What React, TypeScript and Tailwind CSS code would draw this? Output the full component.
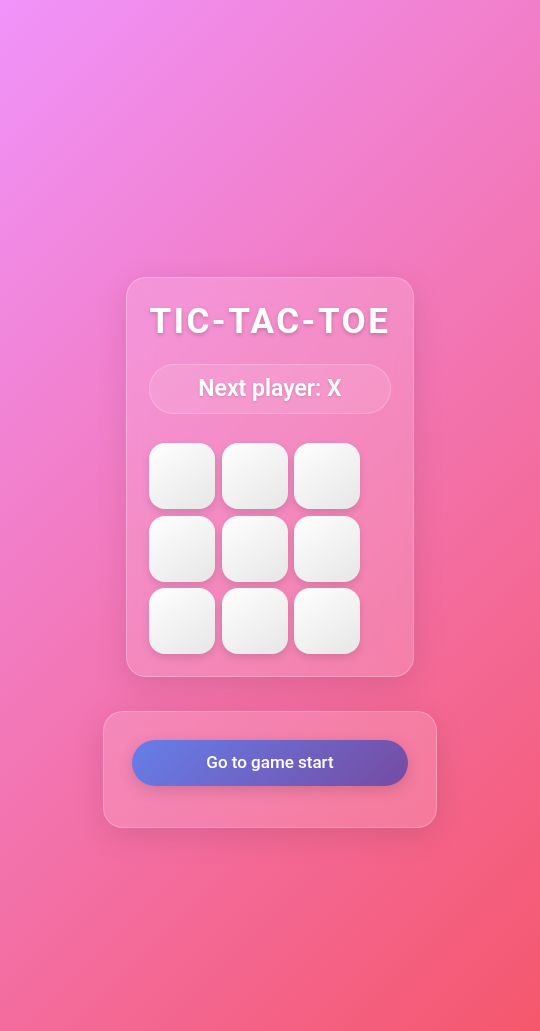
import React, { useState } from 'react';

type Cell = 'X' | 'O' | null;

export default function App() {
  const [cells, setCells] = useState<Cell[]>(Array(9).fill(null));
  const [xNext, setXNext] = useState(true);

  const play = (i: number) => {
    if (cells[i]) return;
    const next = cells.slice();
    next[i] = xNext ? 'X' : 'O';
    setCells(next);
    setXNext(!xNext);
  };

  const reset = () => {
    setCells(Array(9).fill(null));
    setXNext(true);
  };

  return (
    <div className="min-h-screen w-full bg-[linear-gradient(135deg,#f093fb_0%,#f5576c_100%)] flex flex-col items-center pt-[277px] font-['Roboto','Liberation_Sans',sans-serif]">
      {/* Game card */}
      <div className="w-[288px] rounded-[20px] border border-white/25 bg-white/15 backdrop-blur-md shadow-[0_8px_32px_rgba(0,0,0,0.1)] px-[22px] pt-[22px] pb-[22px]">
        <h1 className="text-center text-white font-bold text-[35px] leading-[44px] tracking-[2.5px] [text-shadow:0_2px_4px_rgba(0,0,0,0.2)]">
          TIC-TAC-TOE
        </h1>

        <div className="mt-[20px] h-[50px] rounded-full border border-white/25 bg-white/10 flex items-center justify-center">
          <span className="text-white font-semibold text-[23px] [text-shadow:0_1px_3px_rgba(0,0,0,0.15)]">
            Next player: {xNext ? 'X' : 'O'}
          </span>
        </div>

        <div className="mt-[29px] grid grid-cols-[repeat(3,66px)] gap-x-[6.5px] gap-y-[6.5px]">
          {cells.map((c, i) => (
            <button
              key={i}
              onClick={() => play(i)}
              className="h-[66px] w-[66px] rounded-[16px] bg-[linear-gradient(145deg,#ffffff,#e6e6e6)] shadow-[0_4px_8px_rgba(0,0,0,0.12)] text-[32px] font-bold text-[#764ba2]"
            >
              {c}
            </button>
          ))}
        </div>
      </div>

      {/* Controls */}
      <div className="mt-[34px] w-[334px] h-[117px] rounded-[20px] border border-white/25 bg-white/15 backdrop-blur-md shadow-[0_8px_32px_rgba(0,0,0,0.1)] flex justify-center pt-[28px]">
        <button
          onClick={reset}
          className="w-[276px] h-[46px] rounded-full bg-[linear-gradient(135deg,#667eea_0%,#764ba2_100%)] text-white font-medium text-[17px] shadow-[0_4px_15px_rgba(0,0,0,0.15)]"
        >
          Go to game start
        </button>
      </div>
    </div>
  );
}
